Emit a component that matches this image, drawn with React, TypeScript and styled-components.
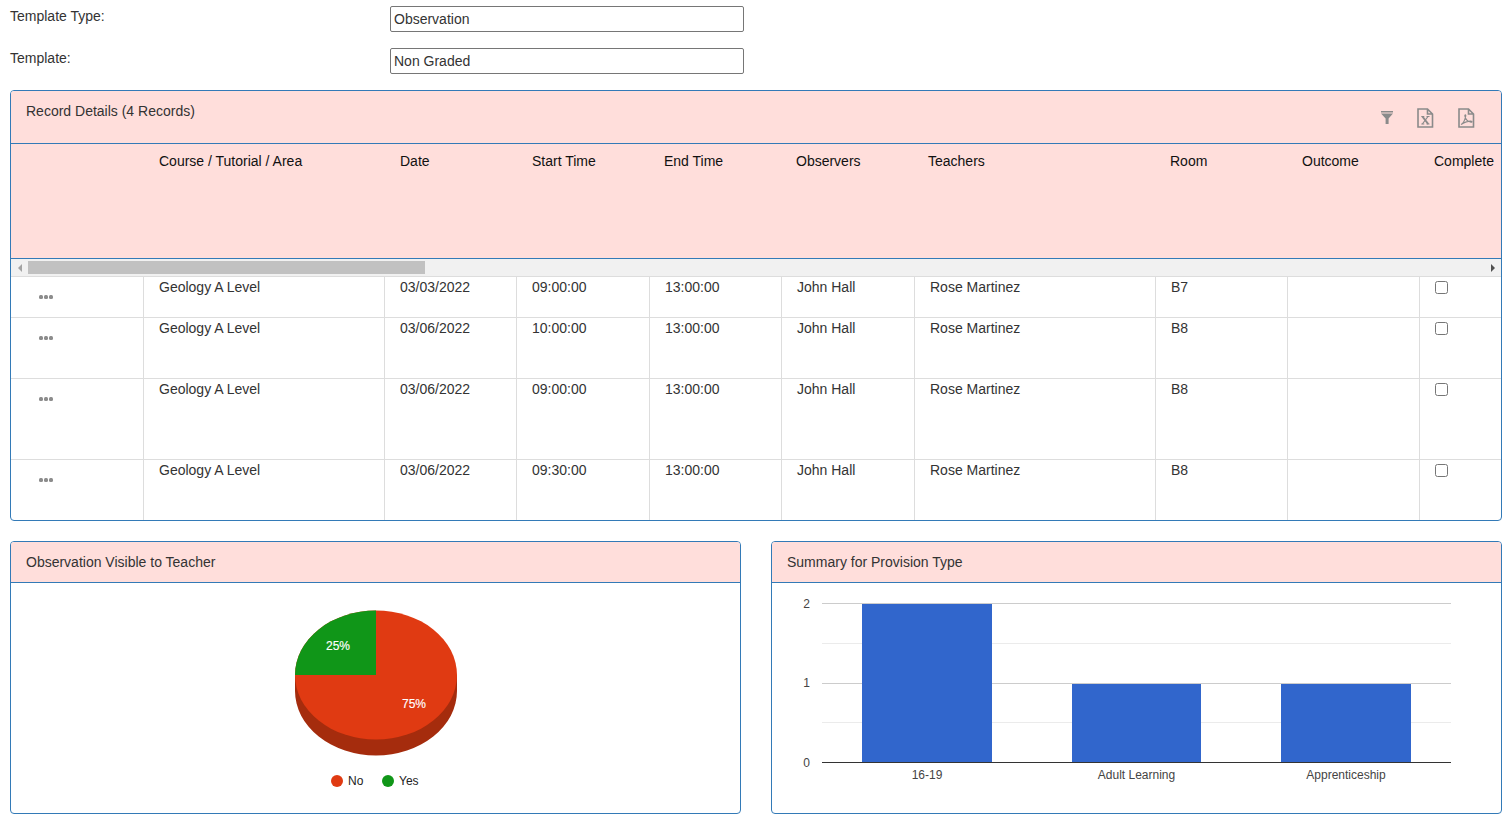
import React from "react";
import styled, { createGlobalStyle } from "styled-components";

const Global = createGlobalStyle`
  html, body { margin: 0; padding: 0; background: #fff; }
  body { font-family: "Liberation Sans", Arial, sans-serif; font-size: 14px; line-height: 20px; color: #333; }
`;

const Page = styled.div`
  width: 1507px;
  padding-top: 6px;
  box-sizing: border-box;
`;
const FormRow = styled.div`
  display: grid;
  grid-template-columns: 380px 354px;
  padding-left: 10px;
  margin-bottom: 16px;
`;
const FormLabel = styled.label`
  color: #333;
`;
const TextInput = styled.input`
  box-sizing: border-box;
  width: 354px;
  height: 26px;
  margin: 0;
  padding: 2px 3px 2px;
  border: 1px solid #767676;
  border-radius: 2px;
  background: #fff;
  color: #333;
  font: 14px "Liberation Sans", Arial, sans-serif;
  outline: none;
`;
const Panel = styled.section`
  box-sizing: border-box;
  border: 1px solid #337ab7;
  border-radius: 4px;
  background: #fff;
  overflow: hidden;
`;
const RecordsPanel = styled(Panel)`
  margin: 0 5px 20px 10px;
  height: 431px;
`;
const PanelHeader = styled.header<{ $height: number }>`
  box-sizing: border-box;
  display: flex;
  justify-content: space-between;
  height: ${(p) => p.$height}px;
  padding: 10px 15px;
  background: #ffdedb;
  border-bottom: 1px solid #337ab7;
  color: #333;
`;
const Tools = styled.div`
  display: flex;
  align-items: flex-start;
  gap: 24px;
  padding: 7px 11px 0 0;
`;
const ToolIcon = styled.svg`
  display: block;
  color: #8a8a8a;
`;
const FunnelSvg = styled(ToolIcon)`
  margin-top: 3px;
`;
const HeadRow = styled.div`
  box-sizing: border-box;
  display: grid;
  grid-template-columns: 133px 241px 132px 132px 132px 132px 242px 132px 132px 82px;
  height: 115px;
  background: #ffdedb;
  border-bottom: 1px solid #337ab7;
`;
const HeadCell = styled.div`
  padding: 7px 0 0 15px;
  color: #111;
  white-space: nowrap;
`;
const ScrollBar = styled.div`
  box-sizing: border-box;
  display: flex;
  align-items: center;
  justify-content: space-between;
  height: 18px;
  background: #f1f1f1;
  border-bottom: 1px solid #ddd;
`;
const ScrollButton = styled.button<{ $dir: "left" | "right" }>`
  width: 17px;
  height: 17px;
  padding: 0;
  border: 0;
  background: none;
  display: flex;
  align-items: center;
  justify-content: center;
  &::before {
    content: "";
    border-style: solid;
    border-width: 4px 0 4px 4px;
    border-color: transparent transparent transparent ${(p) => (p.$dir === "left" ? "#a3a3a3" : "#505050")};
    transform: ${(p) => (p.$dir === "left" ? "rotate(180deg)" : "none")};
  }
`;
const ScrollTrack = styled.div`
  flex: 1;
  height: 13px;
`;
const ScrollThumb = styled.div`
  width: 397px;
  height: 13px;
  background: #c1c1c1;
`;
const Row = styled.div<{ $height: number; $last: boolean }>`
  box-sizing: border-box;
  display: grid;
  grid-template-columns: 133px 241px 132px 133px 132px 133px 241px 132px 132px 81px;
  height: ${(p) => p.$height}px;
  border-bottom: ${(p) => (p.$last ? "0" : "1px solid #ddd")};
`;
const Cell = styled.div`
  padding-left: 15px;
  border-right: 1px solid #ddd;
  color: #333;
  white-space: nowrap;
`;
const MenuCell = styled(Cell)`
  padding: 18px 0 0 28px;
`;
const LastCell = styled.div`
  padding: 4px 0 0 15px;
`;
const Dots = styled.div`
  display: flex;
  gap: 1px;
`;
const Dot = styled.i`
  width: 4px;
  height: 3.5px;
  border-radius: 1.5px;
  background: #8c8c8c;
`;
const Check = styled.input`
  display: block;
  width: 13px;
  height: 13px;
  margin: 0;
`;
const ChartRow = styled.div`
  display: grid;
  grid-template-columns: 731px 731px;
  gap: 30px;
  padding-left: 10px;
`;
const ChartPanel = styled(Panel)`
  height: 273px;
`;
const ChartSvg = styled.svg`
  display: block;
  font-family: "Liberation Sans", Arial, sans-serif;
  font-size: 12px;
`;

const headers = ["", "Course / Tutorial / Area", "Date", "Start Time", "End Time", "Observers", "Teachers", "Room", "Outcome", "Complete"];
const records = [
  { date: "03/03/2022", start: "09:00:00", room: "B7", height: 41 },
  { date: "03/06/2022", start: "10:00:00", room: "B8", height: 61 },
  { date: "03/06/2022", start: "09:00:00", room: "B8", height: 81 },
  { date: "03/06/2022", start: "09:30:00", room: "B8", height: 60 },
];

const FunnelIcon = () => (
  <FunnelSvg width="12" height="13" viewBox="0 0 12 13">
    <path d="M0 0h12v1.600H0zM0 2.600h12L7.600 7.600V13H4.600V7.600z" fill="currentColor" />
  </FunnelSvg>
);
const FileShape = () => (
  <path d="M1 1h9.500L15.500 6v13H1zM10.500 1v5h5" fill="none" stroke="currentColor" strokeWidth="1.600" />
);
const ExcelIcon = () => (
  <ToolIcon width="17" height="20" viewBox="0 0 17 20">
    <FileShape />
    <path d="M4.300 8.500h3M9.500 8.500h3M4.300 16h3M9.500 16h3" fill="none" stroke="currentColor" strokeWidth="1.200" />
    <path d="M5.400 8.500l5.800 7.500" fill="none" stroke="currentColor" strokeWidth="2" />
    <path d="M11 8.500l-5.600 7.500" fill="none" stroke="currentColor" strokeWidth="1.200" />
  </ToolIcon>
);
const PdfIcon = () => (
  <ToolIcon width="17" height="20" viewBox="0 0 17 20">
    <FileShape />
    <path d="M3 16.500c2-1 4-4.500 4.700-8.500.3-1.500-1-1.500-.8 0 .5 3 2.500 5.500 6.100 6.200 1.300.2 1.300-1 0-1-2.500-.1-6 1-10 3.300z" fill="none" stroke="currentColor" strokeWidth="1.200" />
  </ToolIcon>
);

const PieChart = () => (
  <ChartSvg width="729" height="230" viewBox="0 0 729 230">
    <path d="M284 92v16a81 64.500 0 0 0 162 0V92z" fill="#a52c0d" />
    <ellipse cx="365" cy="92" rx="81" ry="64.500" fill="#e03a12" />
    <path d="M365 92V27.500A81 64.500 0 0 0 284 92z" fill="#109618" />
    <text x="327" y="67" fill="#fff" stroke="#fff" strokeWidth="0.15" textAnchor="middle">25%</text>
    <text x="403" y="125" fill="#fff" stroke="#fff" strokeWidth="0.15" textAnchor="middle">75%</text>
    <circle cx="326" cy="198" r="6" fill="#e03a12" />
    <text x="337" y="202" fill="#222">No</text>
    <circle cx="377" cy="198" r="6" fill="#109618" />
    <text x="388" y="202" fill="#222">Yes</text>
  </ChartSvg>
);

const BarChart = () => (
  <ChartSvg width="729" height="230" viewBox="0 0 729 230">
    <path d="M50 60.500h629M50 139.500h629" stroke="#ebebeb" />
    <path d="M50 20.500h629M50 100.500h629" stroke="#ccc" />
    <rect x="90" y="21" width="130" height="158" fill="#3166cc" />
    <rect x="300" y="101" width="129" height="78" fill="#3166cc" />
    <rect x="509" y="101" width="130" height="78" fill="#3166cc" />
    <path d="M50 179.500h629" stroke="#333" />
    <g fill="#444" textAnchor="end">
      <text x="38" y="25">2</text>
      <text x="38" y="104">1</text>
      <text x="38" y="184">0</text>
    </g>
    <g fill="#444" textAnchor="middle">
      <text x="155" y="196">16-19</text>
      <text x="364.500" y="196">Adult Learning</text>
      <text x="574" y="196">Apprenticeship</text>
    </g>
  </ChartSvg>
);

export default function App() {
  return (
    <Page>
      <Global />
      <FormRow>
        <FormLabel>Template Type:</FormLabel>
        <TextInput readOnly value="Observation" />
      </FormRow>
      <FormRow>
        <FormLabel>Template:</FormLabel>
        <TextInput readOnly value="Non Graded" />
      </FormRow>
      <RecordsPanel>
        <PanelHeader $height={53}>
          <span>Record Details (4 Records)</span>
          <Tools>
            <FunnelIcon />
            <ExcelIcon />
            <PdfIcon />
          </Tools>
        </PanelHeader>
        <HeadRow>
          {headers.map((h) => (
            <HeadCell key={h || "menu"}>{h}</HeadCell>
          ))}
        </HeadRow>
        <ScrollBar>
          <ScrollButton $dir="left" />
          <ScrollTrack>
            <ScrollThumb />
          </ScrollTrack>
          <ScrollButton $dir="right" />
        </ScrollBar>
        {records.map((r, i) => (
          <Row key={i} $height={r.height} $last={i === records.length - 1}>
            <MenuCell>
              <Dots>
                <Dot />
                <Dot />
                <Dot />
              </Dots>
            </MenuCell>
            <Cell>Geology A Level</Cell>
            <Cell>{r.date}</Cell>
            <Cell>{r.start}</Cell>
            <Cell>13:00:00</Cell>
            <Cell>John Hall</Cell>
            <Cell>Rose Martinez</Cell>
            <Cell>{r.room}</Cell>
            <Cell />
            <LastCell>
              <Check type="checkbox" readOnly />
            </LastCell>
          </Row>
        ))}
      </RecordsPanel>
      <ChartRow>
        <ChartPanel>
          <PanelHeader $height={41}>Observation Visible to Teacher</PanelHeader>
          <PieChart />
        </ChartPanel>
        <ChartPanel>
          <PanelHeader $height={41}>Summary for Provision Type</PanelHeader>
          <BarChart />
        </ChartPanel>
      </ChartRow>
    </Page>
  );
}
